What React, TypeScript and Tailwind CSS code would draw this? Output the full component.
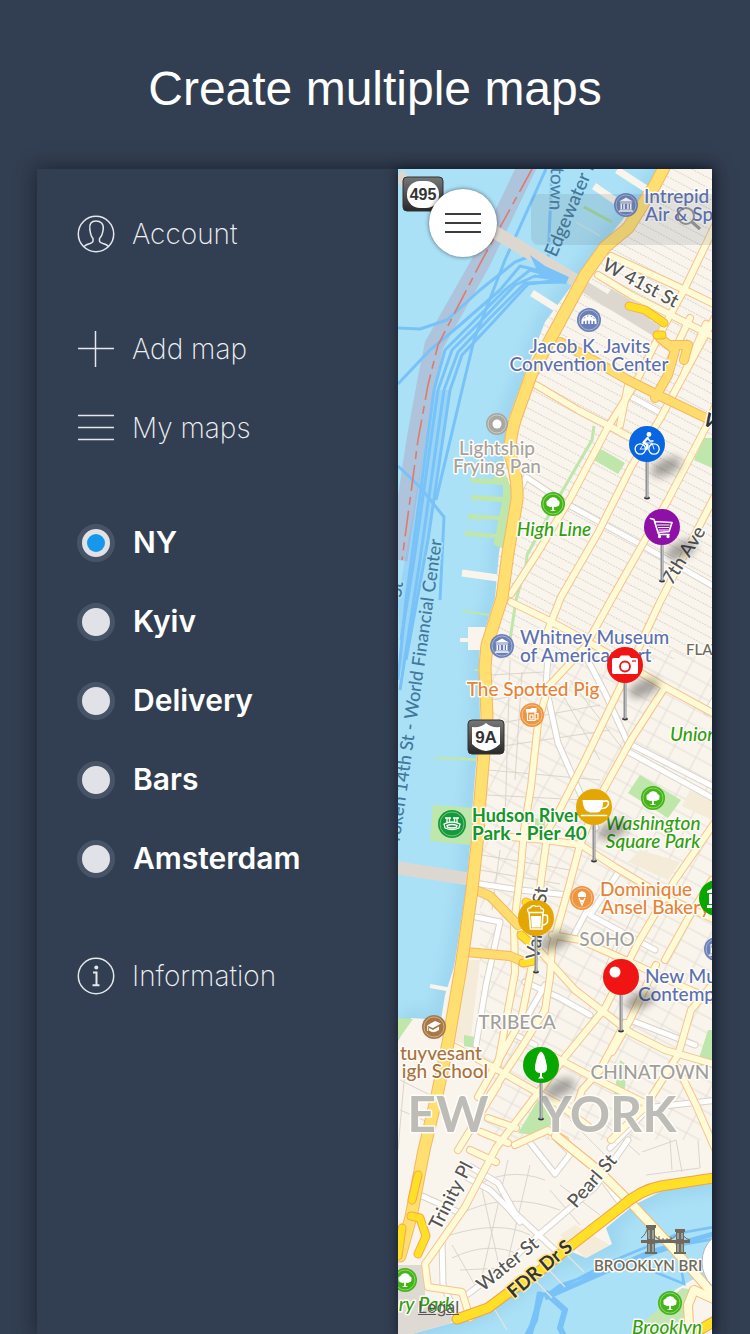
import { useState } from 'react';
import type { ReactNode } from 'react';

const maps = ['NY', 'Kyiv', 'Delivery', 'Bars', 'Amsterdam'];

/* ---------- Map geometry ---------- */

const highway =
  'M668 160 L655 185 L628 228 L605 247 L585 275 L558 325 L531 375 L515 420 Q508 445 511 458 Q518 478 517 500 L508 553 L502 598 L487 645 L485 667 L487 717 L480 800 L478 835 L472 890 L461 967 L448 1043 L436 1100 L424 1150 L411 1217 L400 1256';

const land =
  'M668 160 L655 180 L598 250 L545 322 L524 376 L508 420 L503 453 L508 500 L499 553 L495 598 L480 645 L479 667 L480 717 L473 800 L471 835 L466 890 L454 967 L445 995 L441 1020 L411 1018 L390 1055 L390 1340 L455 1322 L488 1310 L545 1270 L572 1252 L586 1258 L612 1244 L606 1228 L634 1205 L664 1190 L720 1182 L720 160 Z';

const avenues = [
  'M511 594 L538 552 L571 497 L608 427 L635 384 L662 330 L685 288 L720 215',
  'M544 640 L561 597 L598 533 L631 467 L661 417 L681 380 L720 308',
  'M708 423 L668 500 L645 540 L611 600 L585 647 L548 687 L538 723 L531 787 L524 830 L521 867 L514 925 L515 973 L508 1010 L498 1064',
  'M720 395 L708 423',
  'M720 486 L661 600 L625 677 L585 760 L558 813 L548 830 L541 880 L536 945 L528 985 L521 1020 L478 1097',
  'M665 687 L631 740 L598 800 L580 845 L568 890 L552 947 L550 977 L545 1010',
  'M720 815 L675 880 L638 943 L605 1008 L565 1057 L525 1110 L496 1148 L465 1207 L435 1250 L425 1264 L428 1287 L462 1292 L470 1318',
  'M511 602 L548 620 L585 640 L631 667 L665 687 L720 717',
  'M536 385 L578 410 L611 427 L631 438',
  'M598 275 L631 295 L665 312 L720 340',
  'M611 256 L648 273 L685 290 L720 307',
  'M690 318 L670 360',
  'M706 324 L684 374',
  'M628 385 L620 425',
  'M511 837 L545 840 L581 845 L615 867 L665 897 L720 922',
  'M515 923 L548 960 L575 990 L605 1013 L631 1033 L665 1050 L720 1066',
  'M552 935 L580 940 L630 962 L690 990 L720 1002',
  'M455 1047 L498 1070 L538 1093 L560 1105 L590 1128',
  'M545 1052 L598 1080 L645 1103',
  'M625 1023 L600 1070 L582 1090 L575 1110',
  'M656 965 L630 1020 L612 1052',
  'M712 985 L691 1010 L678 1055 L645 1107 L611 1140',
  'M678 1068 L696 1105 L720 1160',
  'M712 880 L690 915 L665 960',
  'M498 1085 L458 1150',
  'M488 1118 L516 1128',
  'M481 1132 L508 1143',
  'M470 1150 L496 1162',
  'M515 1145 L548 1130 L565 1140',
  'M545 1010 L520 1050 L490 1095',
];

const whiteRoads = [
  'M520 490 L526 477 L565 503 L638 543 L720 590',
  'M628 395 L661 413',
  'M548 655 L546 687 L558 743 L580 793 L596 828',
  'M585 655 L605 693 L628 743 L720 790',
  'M625 750 L720 802',
  'M720 690 L707 712',
  'M480 884 L520 890 L568 895',
  'M618 873 L590 915 L655 950',
  'M590 905 L574 935',
  'M476 917 L500 922 L486 985 L476 1045',
  'M525 982 L560 998 L590 1015',
  'M545 985 L528 1015',
  'M506 1030 L535 1045',
  'M630 1020 L695 1045',
  'M645 1108 L720 1100',
  'M645 1112 L610 1148',
  'M471 1167 L498 1183 L515 1213 L555 1250',
  'M468 1178 L490 1190 L508 1208 L520 1222',
  'M468 1294 L500 1270 L541 1233 L595 1187 L628 1140',
  'M528 1140 L555 1174 L571 1153 L558 1140',
  'M600 1175 L618 1200',
  'M422 1196 L458 1212',
  'M442 1240 L443 1285 L450 1300',
];

const trunkRoads = [
  'M560 342 L598 363 L628 380 L658 395 L712 421',
  'M660 338 L675 350 L668 375 L655 398',
  'M672 345 L688 345 L684 360',
  'M476 890 L490 896 L518 925',
  'M466 952 L510 956 L524 962',
];

const accentRoads = [
  'M629 306 L645 310 L664 323',
  'M657 335 L662 335',
  'M521 935 L536 948',
  'M523 963 L533 961',
  'M418 1175 L412 1200',
  'M411 1216 L420 1218 L426 1236 L418 1254',
  'M402 1228 L398 1256',
  'M526 902 L532 905',
];

const minorRoads = [
  'M490 675 L545 672', 'M492 700 L544 690', 'M490 725 L600 705', 'M490 748 L610 730',
  'M488 770 L600 780', 'M487 795 L585 800', 'M510 660 L505 820', 'M522 672 L515 780',
  'M560 690 L600 760', 'M570 680 L622 748', 'M482 855 L570 870', 'M480 870 L560 884',
  'M500 850 L492 910', 'M620 930 L600 980', 'M640 900 L612 960', 'M560 1010 L530 1070',
  'M470 1190 Q505 1165 545 1180', 'M458 1215 Q505 1190 560 1210', 'M450 1235 Q500 1220 530 1235',
  'M452 1258 Q490 1240 520 1255', 'M480 1180 L500 1270', 'M508 1160 L480 1285', 'M530 1165 L508 1260',
  'M452 1245 L475 1285', 'M550 1190 L580 1225', 'M560 1185 L600 1215', 'M460 1270 L505 1268',
  'M642 1152 L676 1140 L682 1172', 'M646 1175 L700 1168', 'M670 1140 L672 1170', 'M698 1140 L700 1168',
  'M400 1080 L432 1096', 'M400 1110 L428 1122', 'M405 1070 L398 1150', 'M600 1120 L640 1155', 'M570 1120 L610 1160',
];

const ferries = [
  'M398 328 L420 329 L447 320 L480 290 L515 262 L528 257 L545 266 L568 275',
  'M398 384 L430 350 L460 325 L500 290 L520 266 L545 272 L569 278',
  'M434 390 L445 350 L470 325 L505 290 L530 270 L568 280',
  'M438 390 L452 350 L480 322 L515 285 L535 276 L568 281',
  'M444 390 L458 352 L490 318 L525 283 L566 282',
  'M450 390 L462 355 L495 320 L528 284 L560 280',
  'M552 169 L548 262 L568 276',
  'M546 169 L505 260 L474 340 L462 390',
  'M434 390 L406 600 L398 680',
  'M438 390 L414 560 L401 640',
  'M444 390 L420 560 L400 690',
  'M450 390 L428 540 L406 660',
  'M462 390 L436 500',
  'M398 466 L420 487 L444 517 L440 600',
];

const piers = ['M594 186 L620 204', 'M617 170 L648 190', 'M532 293 L562 312', 'M462 573 L498 578'];

/* ---------- Map pieces ---------- */

type GlyphKind = 'museum' | 'hall' | 'tree' | 'beer' | 'cone' | 'school' | 'dot' | 'stadium';
type Place = { x: number; y: number; color: string; kind: GlyphKind; r?: number };

function Glyph({ kind }: { kind: GlyphKind }) {
  switch (kind) {
    case 'museum':
      return (
        <path
          fill="#fff"
          d="M-7 -3.6 L0 -7.5 L7 -3.6 Z M-6 -2.6 H6 V-1.6 H-6Z M-5.5 -1 H-4 V4 H-5.5Z M-2.7 -1 H-1.2 V4 H-2.7Z M1.2 -1 H2.7 V4 H1.2Z M4 -1 H5.5 V4 H4Z M-6 4.4 H6 V5.2 H-6Z M-7 5.6 H7 V6.8 H-7Z"
        />
      );
    case 'hall':
      return (
        <g>
          <path
            fill="#fff"
            d="M-7.5 4 V0 Q-6 -5 0 -5.6 Q6 -5 7.5 0 V4 H5.6 V1.5 Q4.8 0 4 1.5 V4 H2.4 V1 Q1.6 -0.6 0.8 1 V4 H-0.8 V1 Q-1.6 -0.6 -2.4 1 V4 H-4 V1.5 Q-4.8 0 -5.6 1.5 V4Z"
          />
          <path d="M-5 -1.5 L-3.6 -3 M-2 -3.7 L-0.6 -4 M1.8 -3.8 L3 -3.2 M4.3 -2.4 L5.3 -1.2" stroke="#6c80b8" strokeWidth="0.9" />
        </g>
      );
    case 'tree':
      return (
        <path
          fill="#fff"
          d="M-0.9 6 V2.4 Q-3 3.6 -4.5 2.2 Q-7 1.8 -6.4 -0.6 Q-7.3 -3 -4.6 -4 Q-3.2 -7 0 -6.8 Q3.4 -7 4.6 -4 Q7.4 -2.8 6.4 -0.4 Q6.8 2 4.3 2.3 Q2.6 3.5 0.9 2.4 V6 L3.4 7 H-3.4Z"
        />
      );
    case 'beer':
      return (
        <g fill="none" stroke="#fff" strokeWidth="1.2">
          <path d="M-4.5 -3 V5.5 H3 V-3 M3 -1.5 H6 V4 H3 M-2 0 V4 H1 V0Z" />
          <path fill="#fff" d="M-5.5 -3 V-5.5 H-1 L0 -6.5 H4 V-3Z" />
        </g>
      );
    case 'cone':
      return (
        <g>
          <path fill="#fff" d="M-4 -1 Q-5 -6 0 -6.8 Q5 -6 4 -1Z" />
          <path fill="none" stroke="#fff" strokeWidth="1.2" d="M-3 0 L0 7 L3 0 M-2 2 L1.5 3 M2 2 L-1 4" />
        </g>
      );
    case 'school':
      return (
        <g>
          <path fill="#fff" d="M-7 -1.5 L1 -6 L7 -3.5 L-1 1Z M-5 1 L-1 3 L5 -0.5 V3 Q0 7 -5 3.5Z" />
          <path fill="none" stroke="#fff" d="M-6.3 -1 V4" />
        </g>
      );
    case 'stadium':
      return (
        <path
          fill="none"
          stroke="#fff"
          strokeWidth="1.3"
          d="M-8 0 Q0 -4 8 0 L7 4 Q0 7 -7 4Z M-5 1.5 Q0 -0.5 5 1.5 L4.5 3.2 Q0 4.6 -4.5 3.2Z M-5 -1.5 V-6 M5 -1.5 V-6 M-2.5 -2.5 V-6 M2.5 -2.5 V-6 M-7 -6 H-1 M1 -6 H7"
        />
      );
    default:
      return <circle r="4.5" fill="#fff" />;
  }
}

const places: Place[] = [
  { x: 626, y: 205, color: '#6c80b8', kind: 'museum' },
  { x: 589, y: 320, color: '#6c80b8', kind: 'hall' },
  { x: 502, y: 646, color: '#6c80b8', kind: 'museum' },
  { x: 716, y: 949, color: '#6c80b8', kind: 'museum' },
  { x: 497, y: 424, color: '#a9a7a2', kind: 'dot', r: 10 },
  { x: 553, y: 504, color: '#44b516', kind: 'tree' },
  { x: 653, y: 798, color: '#44b516', kind: 'tree' },
  { x: 405, y: 1280, color: '#44b516', kind: 'tree' },
  { x: 670, y: 1303, color: '#44b516', kind: 'tree' },
  { x: 532, y: 715, color: '#ee9540', kind: 'beer' },
  { x: 582, y: 898, color: '#ee9540', kind: 'cone' },
  { x: 434, y: 1027, color: '#aa7845', kind: 'school' },
  { x: 452, y: 824, color: '#159a3a', kind: 'stadium', r: 13 },
];

type LabelData = {
  t: string;
  x: number;
  y: number;
  c: string;
  s?: number;
  w?: number;
  it?: boolean;
  a?: 'start' | 'middle' | 'end';
  rot?: number;
  halo?: string;
};

const blue = '#5b70b0';
const green = '#2f9f10';
const street = '#555555';
const grey = '#9f9f9c';

const labels: LabelData[] = [
  { t: 'EW', x: 448, y: 1132, c: '#bdbcb6', s: 50, w: 700, a: 'middle' },
  { t: 'YORK', x: 608, y: 1132, c: '#bdbcb6', s: 50, w: 700, a: 'middle' },
  { t: 'town', x: 551, y: 167, c: '#4a80a6', rot: 92, halo: '#abe1f6' },
  { t: 'Edgewater F', x: 556, y: 258, c: '#41789c', rot: -67, halo: '#abe1f6' },
  { t: 'roken 14th St - World Financial Center', x: 442, y: 540, c: '#41789c', s: 18, rot: -82, a: 'end', halo: '#abe1f6' },
  { t: 'St', x: 401, y: 598, c: '#41789c', s: 18, rot: -82, halo: '#abe1f6' },
  { t: 'W 41st St', x: 601, y: 269, c: street, rot: 28 },
  { t: 'W', x: 702, y: 424, c: '#333333', w: 700, rot: 28 },
  { t: '7th Ave', x: 672, y: 586, c: street, rot: -58 },
  { t: 'Varick St', x: 539, y: 960, c: street, rot: -83 },
  { t: 'Trinity Pl', x: 440, y: 1231, c: street, rot: -63 },
  { t: 'Pearl St', x: 576, y: 1209, c: street, rot: -49 },
  { t: 'Water St', x: 483, y: 1292, c: street, rot: -39 },
  { t: 'FDR Dr S', x: 514, y: 1299, c: '#333333', w: 700, rot: -40, halo: '#ffe98a' },
  { t: 'Intrepid', x: 644, y: 203, c: blue },
  { t: 'Air & Space', x: 645, y: 221, c: blue },
  { t: 'Jacob K. Javits', x: 590, y: 353, c: blue, a: 'middle' },
  { t: 'Convention Center', x: 589, y: 371, c: blue, a: 'middle' },
  { t: 'Lightship', x: 497, y: 455, c: '#a5a39e', a: 'middle' },
  { t: 'Frying Pan', x: 497, y: 473, c: '#a5a39e', a: 'middle' },
  { t: 'High Line', x: 554, y: 536, c: green, it: true, a: 'middle' },
  { t: 'Whitney Museum', x: 520, y: 644, c: blue },
  { t: 'of American Art', x: 520, y: 662, c: blue },
  { t: 'The Spotted Pig', x: 533, y: 696, c: '#e5833a', a: 'middle' },
  { t: 'FLATIRON', x: 686, y: 655, c: '#6e6a5c', s: 15 },
  { t: 'Union', x: 670, y: 741, c: green, it: true },
  { t: 'Hudson River', x: 472, y: 822, c: '#15952a', w: 700, s: 18 },
  { t: 'Park - Pier 40', x: 472, y: 840, c: '#15952a', w: 700 },
  { t: 'Washington', x: 653, y: 830, c: green, it: true, a: 'middle' },
  { t: 'Square Park', x: 653, y: 848, c: green, it: true, a: 'middle' },
  { t: 'Dominique', x: 600, y: 896, c: '#e5833a' },
  { t: 'Ansel Bakery', x: 601, y: 914, c: '#e5833a' },
  { t: 'SOHO', x: 607, y: 946, c: grey, a: 'middle' },
  { t: 'TRIBECA', x: 517, y: 1029, c: grey, a: 'middle' },
  { t: 'CHINATOWN', x: 650, y: 1079, c: grey, a: 'middle' },
  { t: 'New Museum', x: 645, y: 983, c: blue },
  { t: 'Contemporary', x: 638, y: 1001, c: blue },
  { t: 'tuyvesant', x: 482, y: 1060, c: '#a9713f', a: 'end' },
  { t: 'igh School', x: 488, y: 1078, c: '#a9713f', a: 'end' },
  { t: 'BROOKLYN BRI', x: 594, y: 1271, c: '#6e6a5c', s: 15, w: 600 },
  { t: 'ry Park', x: 454, y: 1311, c: green, it: true, a: 'end' },
  { t: 'Brooklyn', x: 632, y: 1334, c: green, it: true },
];

function Label({ t, x, y, c, s = 19, w = 500, it, a = 'start', rot, halo = '#fffdf8' }: LabelData) {
  return (
    <text
      x={x}
      y={y}
      fill={c}
      fontSize={s}
      fontWeight={w}
      fontStyle={it ? 'italic' : 'normal'}
      textAnchor={a}
      stroke={halo}
      strokeWidth="3"
      strokeLinejoin="round"
      paintOrder="stroke"
      transform={rot ? `rotate(${rot} ${x} ${y})` : undefined}
    >
      {t}
    </text>
  );
}

function Pin({ x, y, color, children }: { x: number; y: number; color: string; children?: ReactNode }) {
  return (
    <g transform={`translate(${x} ${y})`}>
      <ellipse cx="19" cy="23" rx="16" ry="8" fill="#000" opacity="0.34" transform="rotate(-24 19 23)" filter="url(#soft)" />
      <ellipse cx="0" cy="54" rx="3" ry="1.4" fill="#333" />
      <path d="M0 16 V54" stroke="#8f9094" strokeWidth="3" />
      <path d="M0.5 16 V53" stroke="#b9babd" strokeWidth="1" />
      <circle r="18" fill={color} />
      {children}
    </g>
  );
}

function Roads({ list, casing, fill, width }: { list: string[]; casing: string; fill: string; width: number }) {
  return (
    <g fill="none" strokeLinecap="round" strokeLinejoin="round">
      <g stroke={casing} strokeWidth={width + 2}>
        {list.map((d) => (
          <path key={d} d={d} />
        ))}
      </g>
      <g stroke={fill} strokeWidth={width}>
        {list.map((d) => (
          <path key={d} d={d} />
        ))}
      </g>
    </g>
  );
}

function CityMap() {
  return (
    <svg
      className="absolute inset-0 h-full w-full font-['Lato','Noto_Sans',sans-serif]"
      viewBox="398 169 314 1165"
      preserveAspectRatio="xMinYMin slice"
      role="img"
      aria-label="Map of New York"
    >
      <defs>
        <filter id="soft" x="-50%" y="-80%" width="200%" height="260%">
          <feGaussianBlur stdDeviation="4" />
        </filter>
        <filter id="shore" x="-20%" y="-5%" width="140%" height="110%">
          <feGaussianBlur stdDeviation="7" />
        </filter>
        <pattern id="blocks" width="60" height="9" patternUnits="userSpaceOnUse" patternTransform="rotate(28)">
          <path d="M0 4.5 H60" stroke="#d3cdc5" strokeWidth="0.8" strokeDasharray="2 1" />
        </pattern>
        <pattern id="lots" width="24" height="14" patternUnits="userSpaceOnUse" patternTransform="rotate(28)">
          <path d="M0 6 H24 M10 0 V14" fill="none" stroke="#ddd8d0" strokeWidth="0.8" />
        </pattern>
        <linearGradient id="shield" x1="0" y1="0" x2="0" y2="1">
          <stop offset="0" stopColor="#777" />
          <stop offset="1" stopColor="#292929" />
        </linearGradient>
        <clipPath id="island">
          <path d={land} />
        </clipPath>
      </defs>

      {/* Water and land */}
      <rect x="390" y="160" width="700" height="1200" fill="#abe1f6" />
      <path d={land} fill="none" stroke="#92cdeb" strokeWidth="18" opacity="0.6" filter="url(#shore)" />
      <path d="M434 390 L450 390 L424 560 L402 680 L398 600Z" fill="#8ccaf6" opacity="0.5" />
      <path d="M530 160 L481 262 L434 345 L426 385 L416 440 L398 560" fill="none" stroke="#b296b4" strokeWidth="19" opacity="0.38" />
      <g fill="none" stroke="#78c2f8" strokeWidth="3" strokeLinejoin="round">
        {ferries.map((d) => (
          <path key={d} d={d} />
        ))}
      </g>
      <path d="M532 169 L481 262 L438 345 L428 385 L418 440 L402 560" fill="none" stroke="#dc7c6c" strokeWidth="1.6" strokeDasharray="26 6 8 6" />
      <path d="M488 228 L600 295 M398 868 L475 880 M398 175 L410 185" stroke="#dcd8d0" strokeWidth="13" fill="none" />
      <path d="M530 255 L545 266 L569 277 L566 284 L540 277Z" fill="#78c2f8" />
      <g stroke="#f9f4ec" strokeWidth="7" fill="none">
        {piers.map((d) => (
          <path key={d} d={d} />
        ))}
        <path d="M470 629 L483 629 L483 648 L470 648Z M460 640 H475 M430 986 L452 990" fill="#f9f4ec" strokeWidth="4" />
      </g>
      <path d="M584 207 L612 222" stroke="#a6d998" strokeWidth="3" />
      <path d="M576 222 L600 236" stroke="#dfe6e6" strokeWidth="1" />
      <path d={land} fill="#f9f4ec" />
      <g clipPath="url(#island)">
        <rect x="398" y="169" width="330" height="490" fill="url(#blocks)" />
        <rect x="480" y="650" width="240" height="490" fill="url(#lots)" />
        <g fill="none" stroke="#d6d1c9" strokeWidth="0.9">
          {minorRoads.map((d) => (
            <path key={d} d={d} />
          ))}
        </g>
        <path d="M640 850 L680 862 L668 880 L628 862Z M690 790 L712 800 V820 L682 806Z M455 960 L480 960 L470 1045 L450 1040Z M560 1235 L575 1225 L610 1245 L590 1262Z" fill="#f4ecd9" />
        <path d="M390 1265 H425 V1300 L455 1318 L430 1345 H390Z" fill="#dedad3" />
      </g>

      {/* Parks */}
      <g fill="#bfe6ab">
        <path d="M500 460 L512 490 L508 550 L494 545 V538 L465 536 V531 L496 534 L498 520 L468 519 V514 L499 516 L502 502 L471 500 V495 L503 497 V485 L471 483 V478 L493 479Z" />
        <path d="M601 449 L625 463 L618 474 L594 460Z M712 438 V468 L694 460 L704 438Z" />
        <path d="M433 805 L475 808 L471 845 L430 841Z" />
        <path d="M640 775 L681 800 L668 818 L628 793Z" />
        <path d="M398 1018 L413 1019 L398 1040Z M464 1035 L475 1037 V1048 L464 1046Z M535 818 L545 820 V830 L535 826Z" />
        <path d="M538 1100 L562 1113 L540 1136 L518 1133Z M620 1060 L627 1065 L624 1098 L614 1094Z M708 1030 L712 1030 V1062 L696 1068Z" />
        <path d="M462 610 L490 614 V616 L462 612Z M435 757 L478 758 V761 L435 759Z M474 669 H482 V671 H474Z" />
      </g>
      <path d="M594 426 L592 440 L560 495 L527 555 L526 565 L516 600 L510 640" fill="none" stroke="#bfe6ab" strokeWidth="3" />

      {/* Brooklyn shore */}
      <path d="M720 1272 L692 1280 L675 1290 L640 1330 L640 1345 H720Z" fill="#f9f4ec" />
      <path d="M682 1288 L640 1325 V1345 H672 L695 1290Z" fill="#c4e6b4" />
      <g fill="none" stroke="#78c2f8" strokeWidth="2.6">
        <path d="M720 1226 L680 1233 L610 1262 L545 1296 L560 1285 L680 1245 L720 1238" />
        <path d="M720 1232 L650 1252 L545 1298" strokeWidth="5" />
        <path d="M545 1292 L565 1310 L560 1328 L566 1340 M540 1292 L535 1320 L525 1340 M542 1292 L528 1340" strokeWidth="6" />
        <path d="M676 1240 L684 1284 L655 1272" />
      </g>
      <path d="M549 1270 L565 1287 M565 1253 L584 1272 M535 1280 L552 1298 M495 1310 L507 1330" stroke="#e7e4dc" strokeWidth="1.2" fill="none" />

      {/* Roads */}
      <path d="M580 284 L658 332 M608 294 L650 318" stroke="#dcd8d0" strokeWidth="12" fill="none" />
      <Roads list={whiteRoads} casing="#d9d3ca" fill="#ffffff" width={5} />
      <Roads list={avenues} casing="#f6c48e" fill="#fffbd6" width={6} />
      <Roads list={trunkRoads} casing="#f4b765" fill="#ffdc6e" width={8} />
      <Roads list={['M556 1136 L598 1170 L631 1203 L672 1247 L720 1302', 'M690 1345 L688 1305 L694 1290 L720 1302']} casing="#f4bb7d" fill="#fffbd6" width={8} />
      <Roads list={[highway]} casing="#f4b765" fill="#ffdf70" width={11} />
      <Roads list={['M720 1177 L661 1186 Q640 1190 621 1207 L568 1248 L541 1270 L508 1293 L488 1308 L457 1319', 'M696 1332 L720 1318']} casing="#efa24e" fill="#ffe026" width={9} />
      <Roads list={accentRoads} casing="#f4a94c" fill="#ffe026" width={7} />

      {/* Highway shields */}
      <g fontFamily="Liberation Sans, sans-serif" fontWeight="700" textAnchor="middle">
        <rect x="403" y="177" width="40" height="34" rx="4" fill="url(#shield)" stroke="#333" />
        <rect x="407" y="181" width="32" height="27" rx="13" fill="#fff" />
        <text x="423" y="200" fontSize="16" fill="#333">495</text>
        <rect x="468" y="720" width="36" height="34" rx="4" fill="url(#shield)" stroke="#333" />
        <path d="M486 723 Q491 728 500 727 V744 Q494 750 486 751 Q478 750 472 744 V727 Q481 728 486 723Z" fill="#fff" />
        <text x="486" y="743" fontSize="17" fill="#333">9A</text>
      </g>

      {/* Brooklyn Bridge landmark */}
      <g fill="#70695c">
        <path d="M646 1225 H656 V1228 H655 V1252 H657 V1254 H645 V1252 H647 V1228 H646Z M675 1229 H685 V1232 H684 V1252 H686 V1254 H674 V1252 H676 V1232 H675Z M641 1240 H690 V1243 H641Z" />
        <path d="M641 1238 Q646 1235 648 1226 Q655 1242 666 1240 Q675 1240 680 1230 Q683 1238 690 1240 M659 1236 V1242 M663 1238 V1242 M667 1238 V1242 M671 1237 V1242" fill="none" stroke="#70695c" />
        <path d="M649 1230 V1239 M653 1230 V1239 M649 1244 V1252 M653 1244 V1252 M678 1233 V1239 M682 1233 V1239 M678 1244 V1252 M682 1244 V1252" stroke="#b6dae3" />
      </g>

      {labels.map((l) => (
        <Label key={`${l.t}${l.y}`} {...l} />
      ))}

      {places.map(({ x, y, color, kind, r = 11 }) => (
        <g key={`${x}-${y}`} transform={`translate(${x} ${y})`}>
          <circle r={r + 1} fill={color} />
          <circle r={r - 1} fill="none" stroke="#fff" strokeWidth="0.8" opacity="0.5" />
          <Glyph kind={kind} />
        </g>
      ))}

      {/* Pins */}
      <Pin x={647} y={444} color="#0866e0">
        <g fill="none" stroke="#fff" strokeWidth="1.3" strokeLinecap="round" strokeLinejoin="round">
          <circle cx="-6.7" cy="5" r="5.2" />
          <circle cx="7" cy="5" r="5.2" />
          <path d="M-6.7 5 L-3 -1 L5 -1 L7 5 M-6.7 5 H0 L5 -1" strokeWidth="0.9" />
          <path d="M0.5 -6 L-3.5 -1.5 L0.5 1 L-0.5 5" strokeWidth="2.4" />
          <path d="M0.5 -6 L3 -3 H6" strokeWidth="1.6" />
          <circle cx="2" cy="-9.6" r="1.8" fill="#fff" />
        </g>
      </Pin>
      <Pin x={662} y={527} color="#8e10a6">
        <g fill="none" stroke="#fff" strokeWidth="1.7" strokeLinecap="round" strokeLinejoin="round">
          <path d="M-11.5 -8.5 L-8 -7.5 L-4 5.5 L7 4.5 L10 -4.5 L-7 -5.5 M-4 5.5 L-3 7.5 H7" />
          <path d="M-4.5 -2 H7 M-3.5 0.5 H6.5 M-3 3 H6" strokeWidth="1.2" />
          <circle cx="-2.5" cy="9.5" r="0.8" fill="#fff" />
          <circle cx="6" cy="9.5" r="0.8" fill="#fff" />
        </g>
      </Pin>
      <Pin x={625} y={665} color="#f01414">
        <path d="M-11 -7 H-6 L-4 -9.5 H4 L6 -7 H11 Q13 -7 13 -5 V7.5 Q13 9 11 9 H-11 Q-13 9 -13 7.5 V-5 Q-13 -7 -11 -7Z" fill="#fff" />
        <circle cy="1.5" r="5" fill="none" stroke="#f01414" strokeWidth="1.8" />
        <path d="M7 -4 H11" stroke="#f01414" strokeWidth="1.3" />
      </Pin>
      <Pin x={594} y={807} color="#e4a603">
        <path d="M-11.5 -7 H9.5 Q9 5 3 5.5 H-4 Q-11 4 -11.5 -7Z" fill="#fff" />
        <path d="M9 -5.5 Q15 -7.5 14.5 -3 Q13 1.5 7.5 1.5 M-12.5 8.5 H12.5" fill="none" stroke="#fff" strokeWidth="1.7" strokeLinecap="round" />
      </Pin>
      <Pin x={536} y={918} color="#e4a603">
        <path d="M-7 -6 L-5.5 11 H6 L7 -6 M7 -3 H10 Q11.5 -3 11.5 -1 V4 Q10 7 6.5 7" fill="none" stroke="#fff" strokeWidth="1.6" />
        <path d="M-5 -2 H5 L4.5 9.5 H-4.3Z" fill="#fff" />
        <path d="M-7.5 -5.5 Q-10 -10 -6 -10 Q-3 -14 0 -11.5 Q5 -13 5 -9.5 Q9 -9 7 -5.5Z" fill="#e4a603" stroke="#fff" strokeWidth="1.3" />
      </Pin>
      <Pin x={621} y={977} color="#f01414">
        <circle cx="-6" cy="-5" r="5.5" fill="#fff" />
      </Pin>
      <Pin x={541} y={1065} color="#08a600">
        <path d="M0 -13.5 C4 -11 4.5 -5 6 1 Q7 7.5 1 8 V11.5 L3 13.5 H-3 L-1 11.5 V8 Q-7 7.5 -6 1 C-4.5 -5 -4 -11 0 -13.5Z" fill="#fff" />
      </Pin>
      <g transform="translate(717 898)">
        <circle r="18" fill="#08a600" />
        <path d="M-10 -7 L0 -12 V-5 H-10Z M-8 -4 H-3 V6 H-8Z M-10 7 H0 V10 H-10Z" fill="#fff" />
      </g>
      <circle cx="735" cy="1262" r="33" fill="#fff" stroke="#a9b9c1" strokeWidth="1" />
    </svg>
  );
}

/* ---------- Sidebar ---------- */

const iconProps = {
  width: 38,
  height: 38,
  viewBox: '0 0 38 38',
  fill: 'none',
  stroke: '#e4e7ec',
  strokeWidth: 1.5,
  'aria-hidden': true,
} as const;

function AccountIcon() {
  return (
    <svg {...iconProps}>
      <circle cx="19" cy="19" r="17.7" />
      <path d="M7 31.5 Q9 29.5 13 28.5 Q16 27.5 16 26 V23.5 C13.5 21 13.3 17 12.8 14.5 C12 8.5 14.5 6 19 6 C23.5 6 27 8.5 26.2 14.5 C25.7 17 25.5 21 22.5 23.5 V26 Q22.5 27.5 26 28.5 Q30 29.5 31.5 31.5" />
    </svg>
  );
}

function PlusIcon() {
  return (
    <svg {...iconProps}>
      <path d="M1 18.5 H37 M18.5 1 V37" />
    </svg>
  );
}

function LinesIcon() {
  return (
    <svg {...iconProps}>
      <path d="M1 6.5 H37 M1 18.5 H37 M1 30.5 H37" />
    </svg>
  );
}

function InfoIcon() {
  return (
    <svg {...iconProps}>
      <circle cx="19" cy="19" r="17.7" />
      <path d="M16 15.5 H19.5 V28 M15.5 28.3 H22.5" strokeWidth="2" />
      <circle cx="19.3" cy="10.5" r="2" fill="#e4e7ec" stroke="none" />
    </svg>
  );
}

function NavItem({ icon, children }: { icon: ReactNode; children: ReactNode }) {
  return (
    <button
      type="button"
      className="flex h-[79px] w-full items-center gap-[17px] text-left font-['Inter',sans-serif] text-[28px] font-extralight text-[#eef0f3]"
    >
      {icon}
      {children}
    </button>
  );
}

export default function App() {
  const [active, setActive] = useState('NY');

  return (
    <main className="flex min-h-screen flex-col overflow-hidden bg-[#323e51]">
      <header className="flex h-[169px] items-center justify-center pt-2">
        <h1 className="font-['Liberation_Sans',Arial,sans-serif] text-[48px] leading-none text-white">Create multiple maps</h1>
      </header>

      <div className="mr-[38px] ml-[37px] flex flex-1 shadow-[0_0_18px_rgba(10,15,25,0.6)]">
        <nav aria-label="Main menu" className="w-[361px] shrink-0 bg-[#323e51] pt-[25px] pb-8 pl-10">
          <NavItem icon={<AccountIcon />}>Account</NavItem>
          <div className="mt-9">
            <NavItem icon={<PlusIcon />}>Add map</NavItem>
            <NavItem icon={<LinesIcon />}>My maps</NavItem>
          </div>
          <fieldset className="mt-9">
            <legend className="sr-only">Maps</legend>
            {maps.map((name) => (
              <label
                key={name}
                className="flex h-[79px] cursor-pointer items-center gap-[18px] font-['Inter',sans-serif] text-[30px] font-semibold text-white"
              >
                <input
                  type="radio"
                  name="map"
                  value={name}
                  checked={active === name}
                  onChange={() => setActive(name)}
                  className="grid h-[38px] w-[38px] appearance-none place-items-center rounded-full border-[5px] border-[#475366] bg-[#e0e2e8] before:h-[18px] before:w-[18px] before:rounded-full checked:before:bg-[#1797e9]"
                />
                {name}
              </label>
            ))}
          </fieldset>
          <div className="mt-[38px]">
            <NavItem icon={<InfoIcon />}>Information</NavItem>
          </div>
        </nav>

        <section aria-label="Map" className="relative flex-1 shadow-[0_0_10px_rgba(10,15,25,0.7)]">
          <div className="absolute inset-0 overflow-hidden">
            <CityMap />
            <form role="search" className="absolute top-[25px] right-0 left-[133px] h-[51px]">
              <input
                type="search"
                aria-label="Search the map"
                className="h-full w-full rounded-l-lg bg-[#5a6e78]/15 pr-10 pl-3 outline-none"
              />
              <svg
                width="26"
                height="26"
                viewBox="0 0 26 26"
                fill="none"
                stroke="#77797c"
                aria-hidden="true"
                className="absolute top-[12px] right-[10px] opacity-80"
              >
                <circle cx="10" cy="10" r="8" strokeWidth="2" />
                <path d="M16 16 L24 23" strokeWidth="3" />
              </svg>
            </form>
            <button
              type="button"
              aria-label="Open menu"
              className="absolute top-5 left-[31px] flex h-[68px] w-[68px] flex-col items-center justify-center gap-[7px] rounded-full bg-white shadow-[0_0_4px_rgba(0,0,0,0.55)]"
            >
              <span className="h-0.5 w-9 bg-[#3c3c3c]" />
              <span className="h-0.5 w-9 bg-[#3c3c3c]" />
              <span className="h-0.5 w-9 bg-[#3c3c3c]" />
            </button>
            <a
              href="#legal"
              className="absolute bottom-[15px] left-5 font-['Inter',sans-serif] text-base leading-6 text-[#56565a] underline"
            >
              Legal
            </a>
          </div>
        </section>
      </div>
    </main>
  );
}
